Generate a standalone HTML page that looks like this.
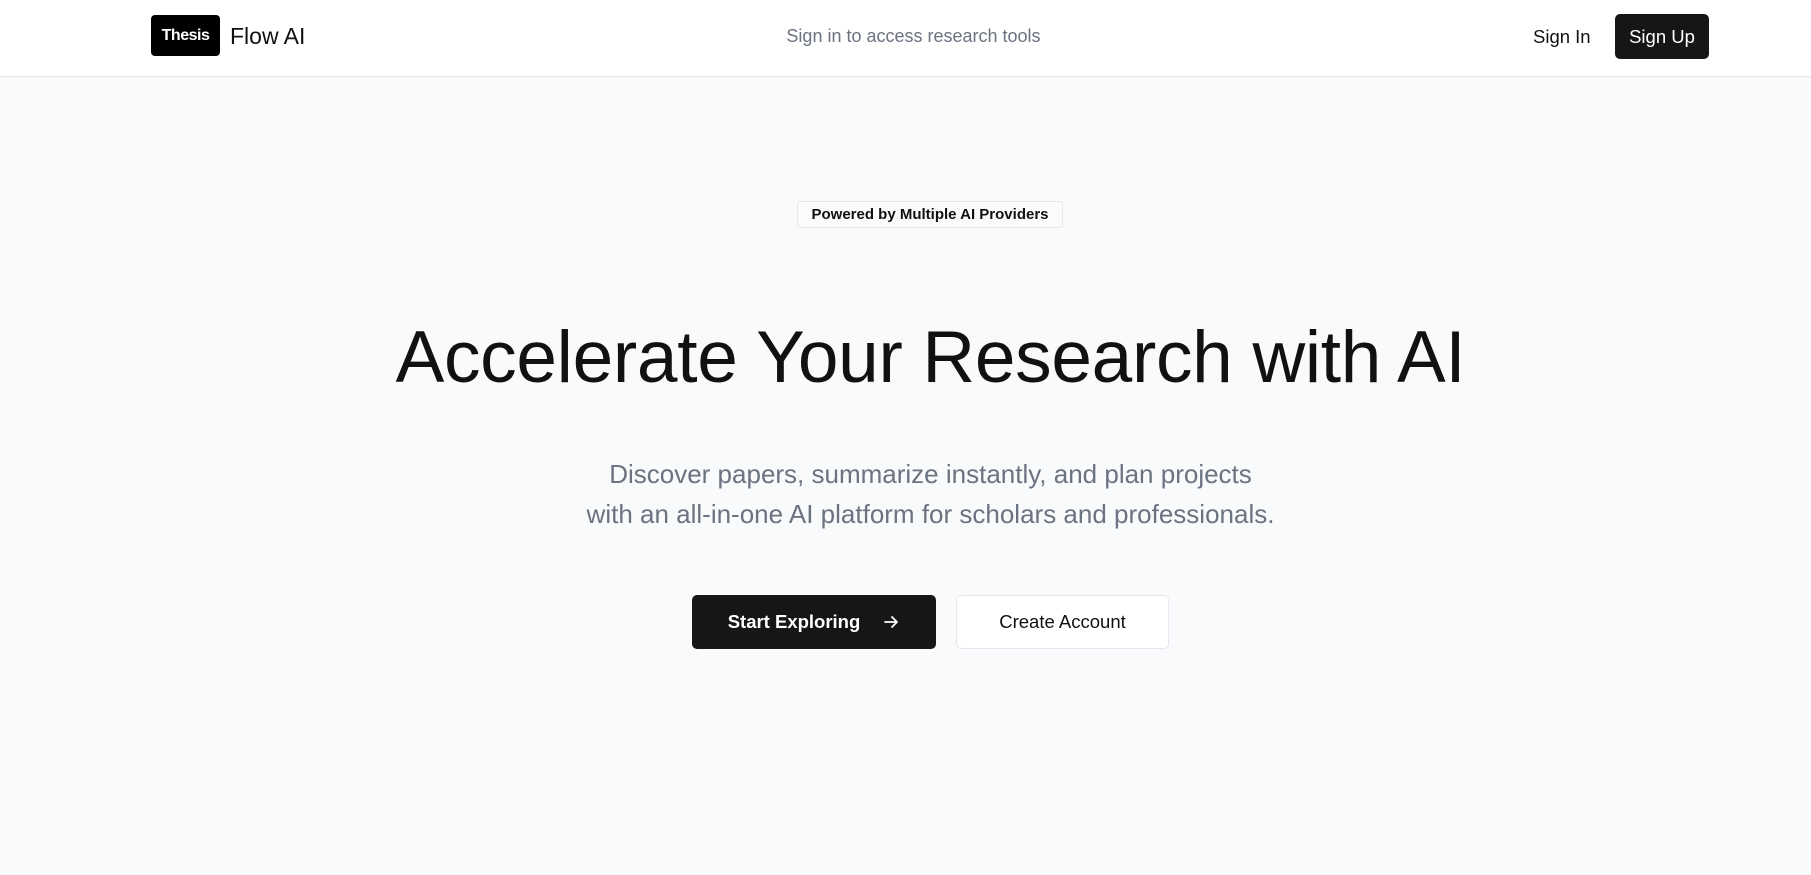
<!DOCTYPE html>
<html><head><meta charset="utf-8"><style>
*{margin:0;padding:0;box-sizing:border-box}
body{width:1811px;height:875px;background:#f9fafb;font-family:"Liberation Sans",sans-serif;color:#111;position:relative;overflow:hidden}
.hdr{position:absolute;left:0;top:0;width:1811px;height:77px;background:#fff;border-bottom:1px solid #e5e7eb}
.logo{position:absolute;left:151px;top:15px;width:69px;height:41px;background:#000;border-radius:4px;color:#fff;font-weight:bold;font-size:16px;display:flex;align-items:center;justify-content:center;letter-spacing:-0.5px}
.brand{position:absolute;left:230px;top:23px;font-size:23px}
.mid{position:absolute;left:8px;width:1811px;top:26px;text-align:center;font-size:18px;color:#6b7280}
.signin{position:absolute;left:1533px;top:26px;font-size:18.5px}
.signup{position:absolute;left:1615px;top:14px;width:94px;height:45px;background:#161616;color:#fff;border-radius:5px;font-size:18.5px;display:flex;align-items:center;justify-content:center}
.badge{position:absolute;left:797px;top:201px;width:266px;height:27px;border:1px solid #e5e7eb;border-radius:4px;background:#fbfbfc;font-size:15px;font-weight:bold;display:flex;align-items:center;justify-content:center}
h1{position:absolute;left:25px;width:1811px;top:316px;text-align:center;font-weight:normal;font-size:73px;letter-spacing:-0.3px;color:#111}
.sub{position:absolute;left:25px;width:1811px;top:454px;text-align:center;font-size:26px;line-height:40px;color:#6b7280}
.b1{position:absolute;left:692px;top:595px;width:244px;height:54px;background:#161616;color:#fff;border-radius:5px;font-size:18.5px;font-weight:bold;display:flex;align-items:center;justify-content:center;gap:22px}
.b2{position:absolute;left:956px;top:595px;width:213px;height:54px;background:#fff;border:1px solid #e5e7eb;border-radius:5px;font-size:18.5px;display:flex;align-items:center;justify-content:center}
</style></head><body>
<div class="hdr">
<div class="logo">Thesis</div>
<div class="brand">Flow AI</div>
<div class="mid">Sign in to access research tools</div>
<div class="signin">Sign In</div>
<div class="signup">Sign Up</div>
</div>
<div class="badge">Powered by Multiple AI Providers</div>
<h1>Accelerate Your Research with AI</h1>
<div class="sub">Discover papers, summarize instantly, and plan projects<br>with an all-in-one AI platform for scholars and professionals.</div>
<div class="b1"><span>Start Exploring</span><svg width="18" height="18" viewBox="0 0 18 18" fill="none" stroke="#fff" stroke-width="1.8" stroke-linecap="round" stroke-linejoin="round"><path d="M3 9h12M10 4l5 5-5 5"/></svg></div>
<div class="b2">Create Account</div>
</body></html>
